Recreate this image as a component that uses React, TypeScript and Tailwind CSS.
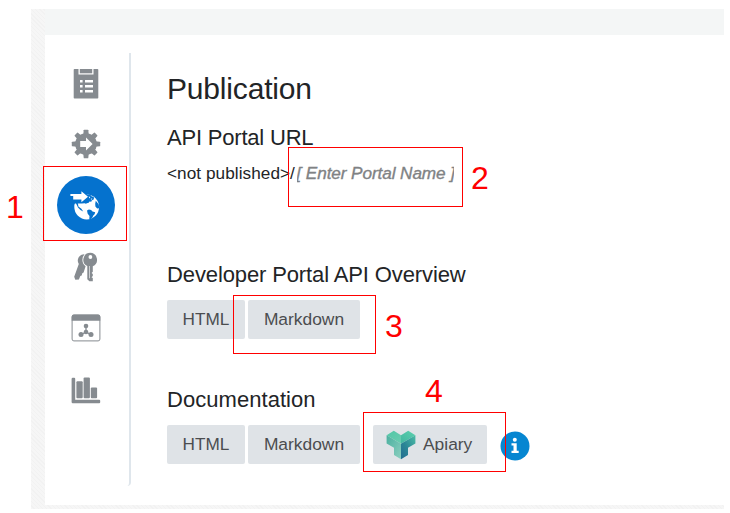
import type { ReactNode } from "react";

function ClipboardIcon() {
  return (
    <svg width="26" height="31" viewBox="0 0 26 31" className="fill-[#868b90]">
      <path fillRule="evenodd" d="M1.5 1h4v5.5h15V1h4q.8 0 .8.8v28q0 .8-.8.8h-23q-.8 0-.8-.8v-28q0-.8.8-.8zM7 12v2.5h2.6V12zm5 0v2.5h8V12zm-5 5v2.5h2.6V17zm5 0v2.5h8V17zm-5 5v2.5h2.6V22zm5 0v2.5h8V22z" />
      <path d="M6.8 1h12.4v4.3H6.8z" />
    </svg>
  );
}

function GearIcon() {
  return (
    <svg width="30" height="30" viewBox="-15 -15 30 30" className="fill-[#868b90]">
      <circle r="10.8" />
      {[0, 45, 90, 135, 180, 225, 270, 315].map((a) => (
        <path key={a} transform={`rotate(${a})`} d="M-2.8-9l.5-4.7q.1-.5.6-.5h3.4q.5 0 .6.5L2.8-9z" />
      ))}
      <path className="fill-white" d="M-5.8-3H0v-3.5L6.6 0 0 6.5V3h-5.8z" />
    </svg>
  );
}

function PublishIcon() {
  return (
    <svg width="58" height="58" viewBox="0 0 58 58">
      <circle cx="29" cy="29" r="29" fill="#0572ce" />
      <circle cx="29.7" cy="31" r="12.4" fill="#fff" />
      <path fill="#0572ce" d="M14 14h12l4 4.5 3.1.2 1.7 1.9 2 .2.1 2.4-2.2 1.2-.4 1.4-1.8-.4-.8 1.3-1.8.6-1 .4-1.3-.5-3 .3H17l-4-5z" />
      <path fill="#0572ce" d="M18.6 26.5l2.3.8.5 3.2 3 2.3 1.8 2.7-2.8-1.4-2.4-2.6z" />
      <path fill="#0572ce" d="M30 34.6l1.9-1.1 2.2.4 1.4 1.5 2.7.9-.6 2-1.3 1.2-1.2 2.5-2 1.5-.8-.4.2-3-1.8-2.3zM38.8 24.8l3 3.7.4 3.8-2 .1-1.8-1.9-.2-2.8z" />
      <path fill="#fff" d="M13.4 18h11v-2.8l6.6 5.6-6.6 5.5v-2.9h-8.2V20h-2.8z" />
      <path fill="#fff" d="M31.6 20.6l1.7.5-.7 1.3zM33.5 23l1.7-.8-.2 1.5z" />
    </svg>
  );
}

function KeysIcon() {
  return (
    <svg width="26" height="30" viewBox="0 0 26 30" className="fill-[#868b90]">
      <path d="M11 2.2A6.4 6.4 0 0 0 5.8 12L1.2 24.7l1.1 3.1 3.6-.3 1.4-3.6 1.4-.5.6-2.1 1.3-.8 2-6.2A8.3 8.3 0 0 1 9.4 7.8a8 8 0 0 1 2.2-5.5z" />
      <path fillRule="evenodd" d="M17.4.8a7 7 0 0 0-3.1 13.3v13.2l2.1 2h3.4v-3.2l-1.3-.8 1.3-1.4v-2l-1.2-1 1.2-1.2v-5.5A7 7 0 0 0 17.4.8zm0 2.3a1.9 1.9 0 1 1 0 3.8 1.9 1.9 0 0 1 0-3.8zM16 14v12.2h.6V14z" />
    </svg>
  );
}

function WindowIcon() {
  return (
    <svg width="30" height="28" viewBox="0 0 30 28" className="fill-[#868b90]">
      <rect x="1.1" y="1.1" width="27.8" height="25.8" rx="1.8" fill="none" stroke="#868b90" />
      <path d="M.7 6.7V2.7Q.7.6 2.8.6h24.4q2.1 0 2.1 2.1v4z" />
      <path d="M15 12v6.2M15 18l-5 2.6M15 18l5 2.6" fill="none" stroke="#868b90" strokeWidth="1.3" />
      <circle cx="15" cy="12" r="2.3" /><circle cx="15" cy="18" r="2.3" />
      <circle cx="10" cy="20.6" r="2.5" /><circle cx="20" cy="20.6" r="2.5" />
    </svg>
  );
}

function ChartIcon() {
  return (
    <svg width="30" height="27" viewBox="0 0 30 27" className="fill-[#868b90]">
      <path d="M1.8.7h1.4q1 0 1 1v21h24q1 0 1 1v1.6q0 1-1 1H1.8Q.6 26.3.6 25.1V1.9Q.6.7 1.8.7z" />
      <rect x="5.4" y="4.3" width="6.3" height="17" rx="1" />
      <rect x="12.6" y=".6" width="6.3" height="20.7" rx="1" />
      <rect x="19.8" y="10.4" width="6.3" height="10.9" rx="1" />
    </svg>
  );
}

function ApiaryLogo() {
  return (
    <svg width="30" height="30" viewBox="0 0 30 30">
      <defs>
        <linearGradient id="left" x1="0" y1="0" x2="1" y2="1"><stop stopColor="#51c7a6" /><stop offset="1" stopColor="#6accb0" /></linearGradient>
        <linearGradient id="right" x1="1" y1="0" x2="0" y2="1"><stop stopColor="#5bd0ae" /><stop offset="1" stopColor="#43b6a0" /></linearGradient>
        <linearGradient id="side" x1="0" y1="0" x2="1" y2="1"><stop stopColor="#4ab09f" /><stop offset="1" stopColor="#8ccfc0" /></linearGradient>
        <linearGradient id="stem" x1="1" y1="0" x2="0" y2="1"><stop stopColor="#4cbda5" /><stop offset=".55" stopColor="#2b8796" /><stop offset="1" stopColor="#236c90" /></linearGradient>
      </defs>
      <path fill="url(#left)" d="M.6 5.2L7.8.8 15 5.2v8.6z" />
      <path fill="url(#right)" d="M15 5.2L22.2.8l7.2 4.4L15 13.8z" />
      <path fill="url(#side)" d="M.6 5.2L15 13.8v15.4l-7-4.1v-7.3L.6 13.6z" />
      <path fill="url(#stem)" d="M15 13.8l14.4-8.6v8.4L22 17.8v7.3l-7 4.1z" />
    </svg>
  );
}

function InfoIcon() {
  return (
    <svg width="30" height="30" viewBox="0 0 30 30" fill="#fff">
      <circle cx="15" cy="15" r="14.5" fill="#0686d1" />
      <circle cx="14.8" cy="8.7" r="2" />
      <path d="M11.5 12.2h5.2v7.5h2v2.2h-7.2v-2.2h2v-5.3h-2z" />
    </svg>
  );
}

function SideItem({ children, raised = true }: { children: ReactNode; raised?: boolean }) {
  return (
    <div className={`flex h-[61.4px] w-full items-center justify-center pr-0.5 ${raised ? "pb-0.5" : ""}`}>
      {children}
    </div>
  );
}

function FormatButtons() {
  return (
    <>
      <button className="h-[39px] w-[78px] rounded-[2px] bg-[#dfe3e7] text-[17.2px] text-[#4b4d4f]">HTML</button>
      <button className="ml-[3px] h-[39px] w-28 rounded-[2px] bg-[#dfe3e7] text-[17.4px] text-[#4b4d4f]">Markdown</button>
    </>
  );
}

export default function App() {
  return (
    <div className="relative h-[513px] w-[730px] overflow-hidden bg-white font-['Liberation_Sans',Arial,sans-serif] text-[#222426]">
      <div className="pt-[9px] pl-[31px]">
        <div className="h-[500px] w-[693px] bg-[repeating-linear-gradient(45deg,#f6f6f6_0px,#f6f6f6_2px,#f2f2f2_2px,#f2f2f2_3px)] pl-3.5">
          <div className="h-[496px] bg-white">
            <header className="h-[26px] bg-[#f4f6f6]" />
            <main className="flex pt-[18px]">
              <nav className="flex h-[433px] w-[86px] flex-col rounded-br-[4px] border-r-2 border-[#dfe6ec]">
                <SideItem raised={false}><ClipboardIcon /></SideItem>
                <SideItem><GearIcon /></SideItem>
                <SideItem><PublishIcon /></SideItem>
                <SideItem><KeysIcon /></SideItem>
                <SideItem><WindowIcon /></SideItem>
                <SideItem raised={false}><ChartIcon /></SideItem>
              </nav>
              <section className="pl-9 pt-[18px] whitespace-nowrap">
                <h1 className="h-9 text-[30px] leading-9 tracking-[-0.18px]">Publication</h1>
                <h2 className="mt-4 h-[30px] text-[22px] leading-[30px] tracking-[-0.2px]">API Portal URL</h2>
                <div className="mt-2 flex h-6 text-[17.2px] leading-6">
                  <span className="w-[129.5px] tracking-[0.05px]">&lt;not published&gt;/</span>
                  <span className="w-[157px] overflow-hidden italic tracking-[-0.1px] text-[#808284] [-webkit-text-stroke:0.35px_#808284]">[ Enter Portal Name ]</span>
                </div>
                <h2 className="mt-[75px] h-[30px] text-[22px] leading-[30px] tracking-[-0.12px]">Developer Portal API Overview</h2>
                <div className="mt-2.5 flex"><FormatButtons /></div>
                <h2 className="mt-[46px] h-[30px] text-[22px] leading-[30px] tracking-[0.05px]">Documentation</h2>
                <div className="mt-2.5 flex items-center">
                  <FormatButtons />
                  <button className="ml-[13px] flex h-[39px] w-[114px] items-center rounded-[2px] bg-[#dfe3e7] pl-[13px] text-[17.4px] text-[#4b4d4f]">
                    <ApiaryLogo />
                    <span className="ml-[7px]">Apiary</span>
                  </button>
                  <span className="ml-[13px] mt-0.5"><InfoIcon /></span>
                </div>
              </section>
            </main>
          </div>
        </div>
      </div>

      <div className="absolute left-[43px] top-[166px] h-[75px] w-[84px] border border-[#ff0000]" />
      <div className="absolute left-[288px] top-[147px] h-[60px] w-[175px] border border-[#ff0000]" />
      <div className="absolute left-[233px] top-[295px] h-[59px] w-[143px] border border-[#ff0000]" />
      <div className="absolute left-[363px] top-[412px] h-[60px] w-[143px] border border-[#ff0000]" />
      <span className="absolute left-[6px] top-[189px] text-[32px] leading-9 text-[#ff0000]">1</span>
      <span className="absolute left-[471px] top-[160px] text-[32px] leading-9 text-[#ff0000]">2</span>
      <span className="absolute left-[385px] top-[308px] text-[32px] leading-9 text-[#ff0000]">3</span>
      <span className="absolute left-[425px] top-[373px] text-[32px] leading-9 text-[#ff0000]">4</span>
    </div>
  );
}
